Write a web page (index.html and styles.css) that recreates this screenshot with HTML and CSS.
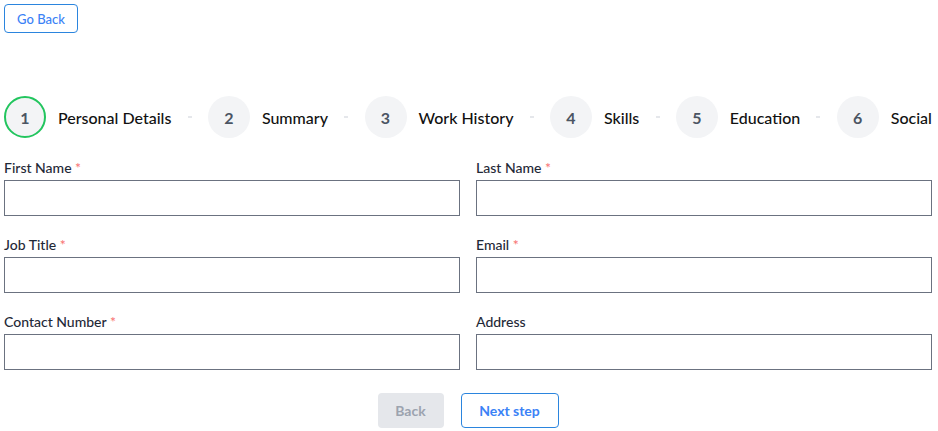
FILE: index.html
```html
<!DOCTYPE html>
<html lang="en">
<head>
<meta charset="utf-8">
<title>Resume Builder</title>
<link rel="stylesheet" href="styles.css">
</head>
<body>
<div class="page">
  <div class="top">
    <button class="btn-outline btn-small" type="button">Go Back</button>
  </div>

  <ol class="stepper">
    <li class="step active"><span class="circle">1</span><span class="step-label">Personal Details</span></li>
    <li class="sep"></li>
    <li class="step"><span class="circle">2</span><span class="step-label">Summary</span></li>
    <li class="sep"></li>
    <li class="step"><span class="circle">3</span><span class="step-label">Work History</span></li>
    <li class="sep"></li>
    <li class="step"><span class="circle">4</span><span class="step-label">Skills</span></li>
    <li class="sep"></li>
    <li class="step"><span class="circle">5</span><span class="step-label">Education</span></li>
    <li class="sep"></li>
    <li class="step"><span class="circle">6</span><span class="step-label">Social</span></li>
  </ol>

  <form class="form">
    <div class="field">
      <label class="label">First Name <span class="req">*</span></label>
      <input class="input" type="text">
    </div>
    <div class="field">
      <label class="label">Last Name <span class="req">*</span></label>
      <input class="input" type="text">
    </div>
    <div class="field">
      <label class="label">Job Title <span class="req">*</span></label>
      <input class="input" type="text">
    </div>
    <div class="field">
      <label class="label">Email <span class="req">*</span></label>
      <input class="input" type="text">
    </div>
    <div class="field">
      <label class="label">Contact Number <span class="req">*</span></label>
      <input class="input" type="text">
    </div>
    <div class="field">
      <label class="label">Address</label>
      <input class="input" type="text">
    </div>
  </form>

  <div class="actions">
    <button class="btn-disabled" type="button">Back</button>
    <button class="btn-outline btn-main" type="button">Next step</button>
  </div>
</div>
</body>
</html>
```

FILE: styles.css
```css
* { box-sizing: border-box; }
html, body { margin: 0; padding: 0; background: #fff; }
body {
  font-family: Lato, "Noto Sans", "Liberation Sans", sans-serif;
  color: #111827;
}
.page {
  width: 928px;
  margin-left: 4px;
  padding-top: 4px;
}
.top { display: flex; }
button { font-family: inherit; cursor: pointer; }
.btn-outline {
  background: #fff;
  border: 1px solid #2b85de;
  color: #3b82f6;
  border-radius: 4px;
}
.btn-small {
  width: 74px;
  height: 29px;
  font-size: 13px;
  font-weight: 500;
  padding: 0;
}
.stepper {
  list-style: none;
  margin: 63px 0 0 0;
  padding: 0;
  display: flex;
  align-items: center;
  justify-content: space-between;
}
.step {
  display: flex;
  align-items: center;
  gap: 12px;
}
.circle {
  width: 42px;
  height: 42px;
  border-radius: 50%;
  background: #f3f4f6;
  color: #4b5563;
  font-weight: 700;
  font-size: 16px;
  display: flex;
  align-items: center;
  justify-content: center;
}
.active .circle { border: 2px solid #22c55e; }
.step-label {
  font-size: 16px;
  font-weight: 500;
  color: #111;
}
.sep {
  width: 4px;
  height: 2px;
  background: #e5e7eb;
}
.form {
  margin-top: 20px;
  display: grid;
  grid-template-columns: 1fr 1fr;
  column-gap: 16px;
  row-gap: 19px;
}
.field { display: flex; flex-direction: column; }
.label {
  font-size: 14px;
  line-height: 20px;
  font-weight: 500;
  color: #1f2937;
  margin-bottom: 2px;
}
.req { color: #f87171; }
.input {
  height: 36px;
  border: 1px solid #6b7280;
  border-radius: 0;
  width: 100%;
  font-family: inherit;
  font-size: 14px;
  padding: 0 8px;
  background: #fff;
}
.actions {
  margin-top: 23px;
  display: flex;
  justify-content: center;
  gap: 17px;
}
.btn-disabled {
  width: 66px;
  height: 35px;
  border: none;
  border-radius: 4px;
  background: #e5e7eb;
  color: #9ca3af;
  font-size: 14px;
  font-weight: 700;
  padding: 0;
}
.btn-main {
  width: 98px;
  height: 35px;
  font-size: 14px;
  font-weight: 700;
  padding: 0;
}
```
